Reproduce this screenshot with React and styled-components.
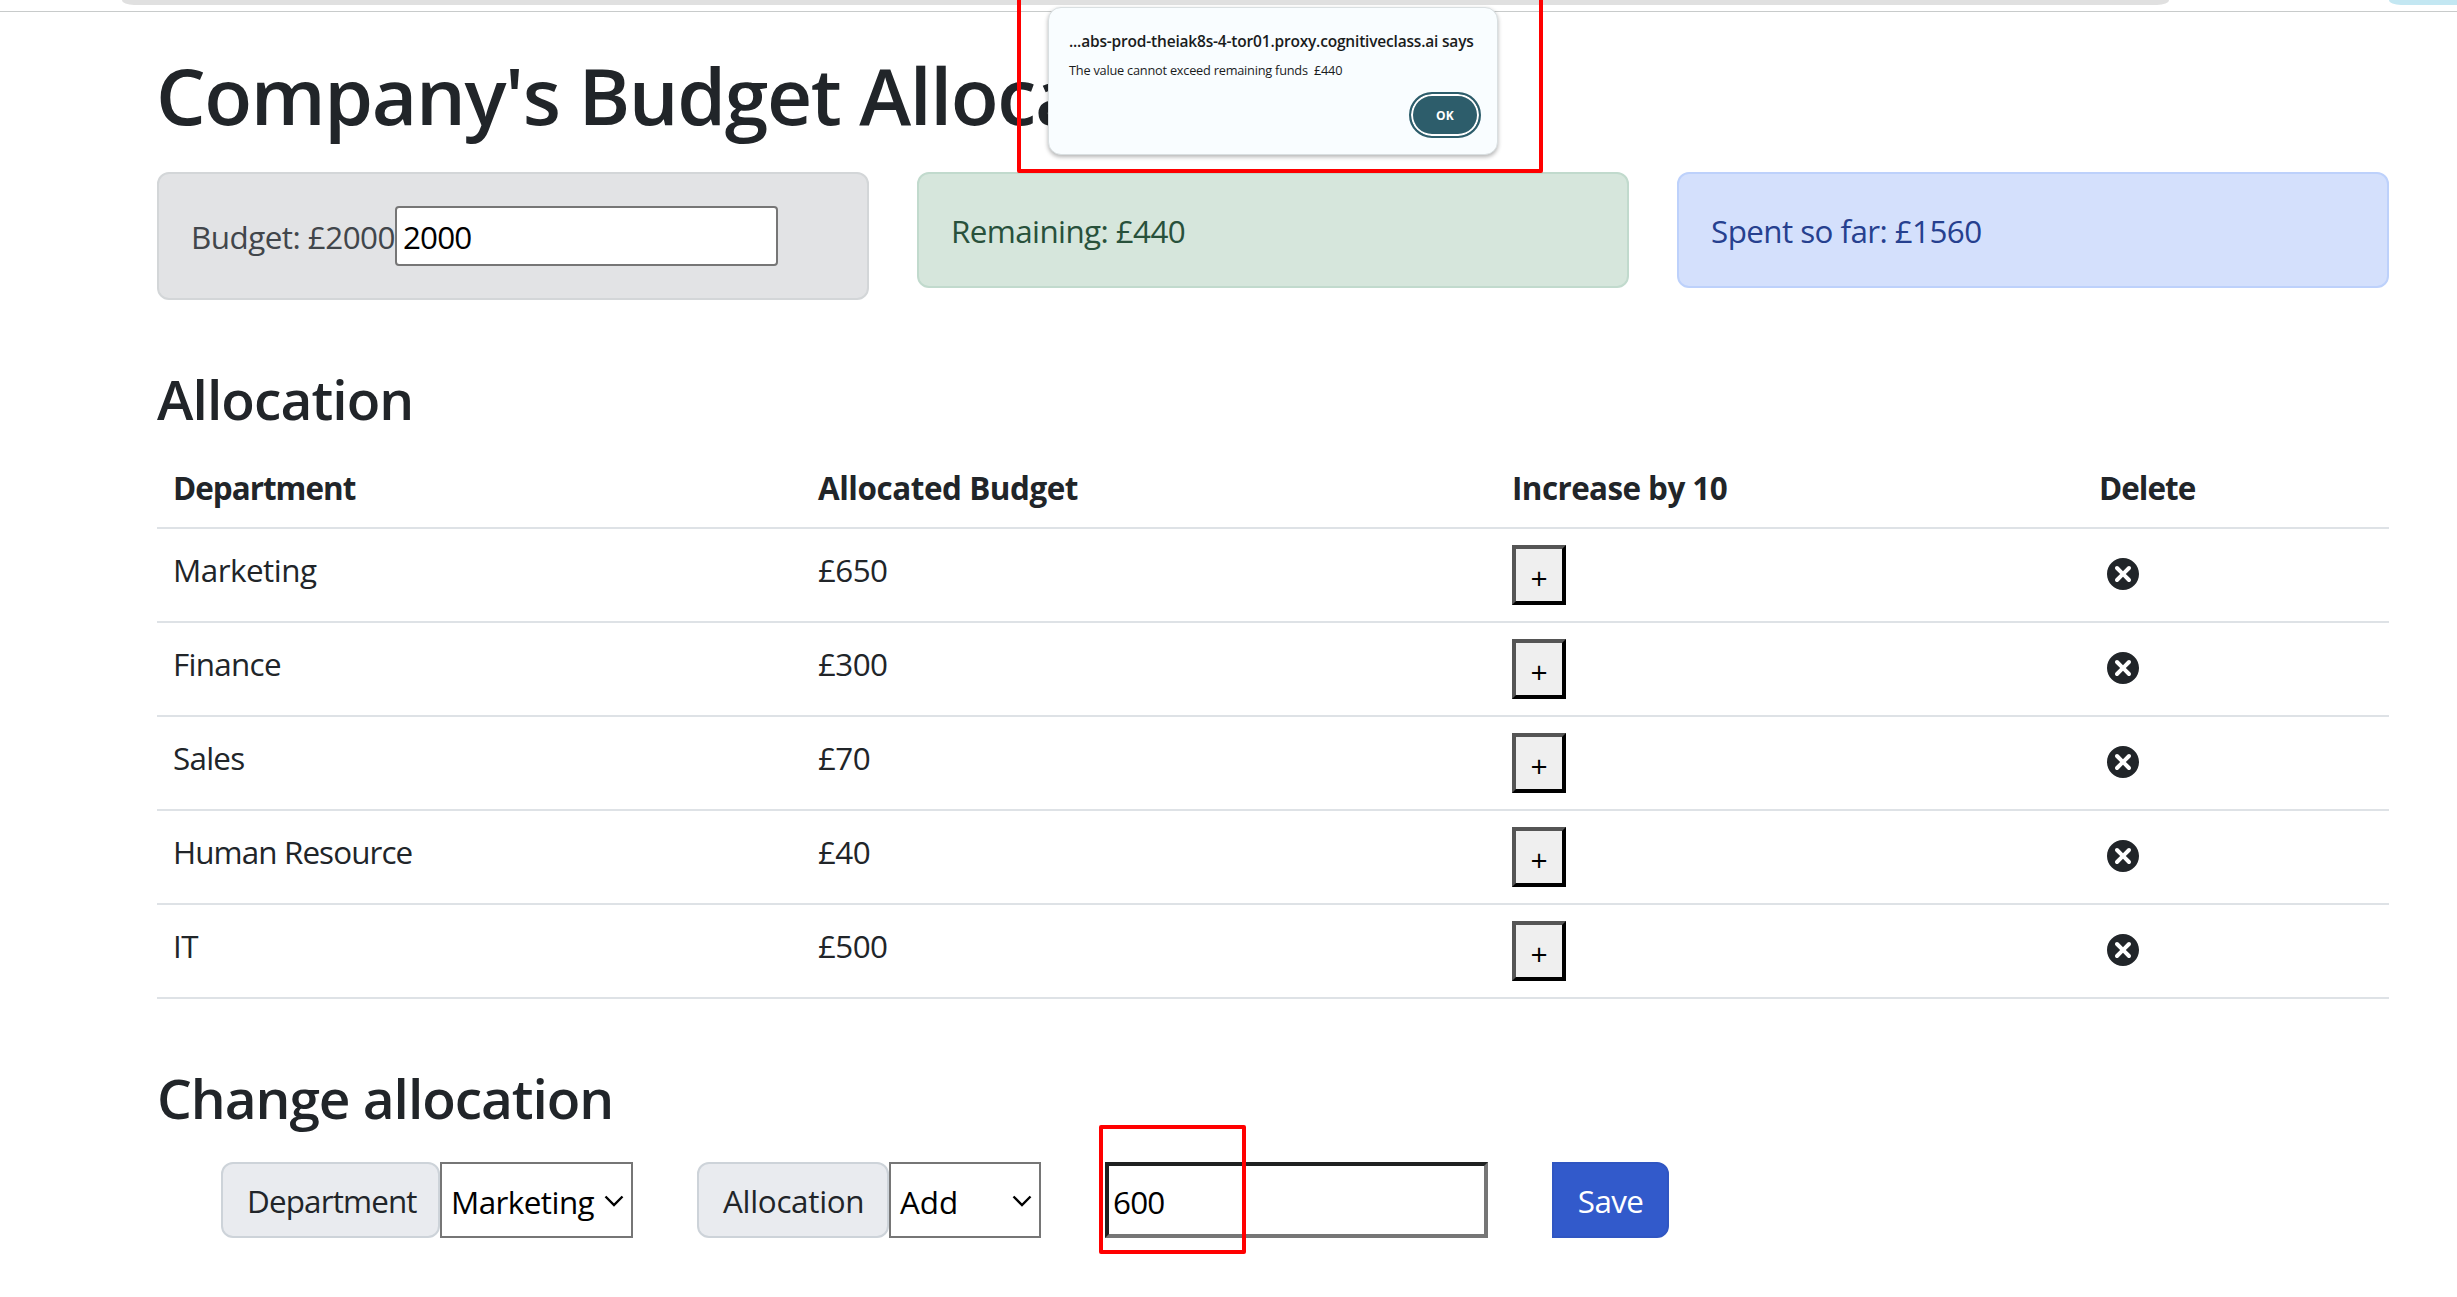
import React from "react";
import styled, { createGlobalStyle } from "styled-components";

const GlobalStyle = createGlobalStyle`
  * { box-sizing: border-box; }
  body {
    margin: 0;
    background: #fff;
    color: #212529;
    font-family: "Open Sans", "Noto Sans", sans-serif;
    font-size: 31.4px;
    line-height: 48px;
    overflow: hidden;
  }
  input, button, select { font-family: inherit; font-size: inherit; line-height: inherit; margin: 0; }
`;

const Screen = styled.div`
  position: relative;
  width: 2457px;
  height: 1297px;
  overflow: hidden;
`;

const BrowserEdge = styled.div`
  display: flex;
  justify-content: space-between;
  height: 12px;
  padding-left: 122px;
  border-bottom: 1px solid #c8cbcb;
`;

const AddressBar = styled.div`
  width: 2047px;
  height: 5px;
  background: #e0e0e0;
  border-radius: 0 0 12px 12px / 0 0 5px 5px;
`;

const ProfileChip = styled.div`
  width: 68px;
  height: 5px;
  background: #c3e7f2;
  border-radius: 0 0 0 12px / 0 0 0 5px;
`;

const Container = styled.main`
  width: 2232px;
  margin-left: 157px;
  padding-top: 35px;
`;

const Title = styled.h1`
  margin: 0 0 0 -1px;
  font-size: 78.5px;
  font-weight: 600;
  line-height: 96px;
  letter-spacing: -1.4px;
  white-space: nowrap;
`;

const Heading = styled.h3`
  margin: 0;
  padding-top: ${(p) => p.$top}px;
  font-size: 55px;
  font-weight: 600;
  line-height: 67px;
  letter-spacing: ${(p) => p.$ls}px;
`;

const Summary = styled.section`
  display: grid;
  grid-template-columns: repeat(3, 1fr);
  column-gap: 48px;
  align-items: start;
  height: 128px;
  margin-top: 29px;
`;

const tones = {
  secondary: "color:#41464b;background:#e2e3e5;border-color:#d3d6d8;",
  success: "color:#28513b;background:#d6e6dc;border-color:#c1dacd;",
  primary: "color:#26408f;background:#d4e0fc;border-color:#bdd1fb;",
};

const Alert = styled.div`
  display: flex;
  align-items: center;
  height: ${(p) => (p.$tall ? 128 : 116)}px;
  padding: 2px 32px 0;
  border: 2px solid;
  border-radius: 12px;
  ${(p) => tones[p.$tone]}
`;

const Text = styled.span`
  letter-spacing: ${(p) => p.$ls}px;
  white-space: pre;
`;

const BudgetInput = styled.input`
  width: 383px;
  height: 60px;
  margin: 0 0 2px;
  padding: 1px 6px 0;
  color: #000;
  background: #fff;
  border: 2px solid #767676;
  border-radius: 4px;
  letter-spacing: -0.87px;
`;

const Table = styled.table`
  width: 2232px;
  margin-top: 15px;
  border-collapse: separate;
  border-spacing: 0;
  table-layout: fixed;
`;

const HeadCell = styled.th`
  width: ${(p) => p.$w}px;
  height: 82px;
  padding: 17px 16px 15px;
  border-bottom: 2px solid #dee2e6;
  text-align: left;
  font-weight: 700;
`;

const Cell = styled.td`
  height: 94px;
  padding: ${(p) => (p.$control ? 16 : 17)}px 16px 0;
  border-bottom: 2px solid #dee2e6;
  vertical-align: top;
`;

const PlusButton = styled.button`
  display: block;
  width: 54px;
  height: 60px;
  padding: 6px 0 0;
  color: #000;
  background: #efefef;
  border: 4px solid;
  border-color: #555 #000 #000 #555;
  border-radius: 0;
  line-height: 46px;
  font-size: 30px;
  text-align: center;
`;

const DeleteIcon = styled.svg`
  display: block;
  width: 48px;
  height: 48px;
  margin-top: 5px;
`;

const Form = styled.form`
  display: flex;
  height: 76px;
  margin: 31px 0 0 64px;
`;

const GroupLabel = styled.label`
  width: ${(p) => p.$w}px;
  padding: 13px 0 0 24px;
  background: #e9ebef;
  border: 2px solid #cdd3d9;
  border-radius: 12px;
`;

const Select = styled.div`
  display: flex;
  justify-content: space-between;
  width: ${(p) => p.$w}px;
  margin-right: 64px;
  padding: 14px 8px 0 9px;
  color: #000;
  background: #fff;
  border: 2px solid #767676;
`;

const Chevron = styled.svg`
  width: 20px;
  height: 14px;
  margin: 16px -1px 0 0;
`;

const AmountInput = styled.input`
  width: 383px;
  height: 76px;
  margin-right: 64px;
  padding: 2px 4px 0;
  color: #000;
  background: #fff;
  border: 4px solid;
  border-color: #1f2121 #767676 #767676 #1f2121;
  border-radius: 0;
  letter-spacing: -0.8px;
`;

const SaveButton = styled.button`
  width: 117px;
  height: 76px;
  padding: 2px 0 0;
  color: #fff;
  background: #325acb;
  border: 2px solid #3056c2;
  border-radius: 0 12px 12px 0;
  letter-spacing: -0.67px;
`;

const Dialog = styled.div`
  position: absolute;
  left: 1048px;
  top: 7px;
  width: 450px;
  height: 148px;
  padding: 23px 16px 0 20px;
  display: flex;
  flex-direction: column;
  color: #191c1d;
  background: #f9fdff;
  border: 1px solid #d9dfe1;
  border-radius: 13px;
  box-shadow: 0 2px 4px rgba(0, 0, 0, 0.3);
`;

const DialogTitle = styled.div`
  font-size: 15.5px;
  line-height: 20px;
  font-weight: 600;
  letter-spacing: -0.19px;
  white-space: nowrap;
`;

const DialogText = styled.div`
  margin-top: 9px;
  font-size: 12.75px;
  line-height: 20px;
  letter-spacing: -0.22px;
  white-space: pre;
`;

const OkButton = styled.button`
  align-self: flex-end;
  width: 72px;
  height: 46px;
  margin-top: 12px;
  padding: 2px 0 0;
  color: #fff;
  background: #2d5d6b;
  border: 2px solid #2d5d6b;
  border-radius: 23px;
  box-shadow: inset 0 0 0 2px #fff;
  font-size: 12px;
  line-height: 16px;
  font-weight: 700;
  letter-spacing: 0.2px;
`;

const RedMark = styled.div`
  position: absolute;
  left: ${(p) => p.$x}px;
  top: ${(p) => p.$y}px;
  width: ${(p) => p.$w}px;
  height: ${(p) => p.$h}px;
  border: 4px solid #f00;
  border-radius: 2px;
`;

const rows = [
  { name: "Marketing", ls: -0.5, cost: "£650" },
  { name: "Finance", ls: -0.7, cost: "£300" },
  { name: "Sales", ls: -0.75, cost: "£70" },
  { name: "Human Resource", ls: -0.9, cost: "£40" },
  { name: "IT", ls: -0.4, cost: "£500" },
];

const columns = [
  { label: "Department", w: 645, ls: -0.98 },
  { label: "Allocated Budget", w: 694, ls: -0.44 },
  { label: "Increase by 10", w: 587, ls: -0.57 },
  { label: "Delete", w: 306, ls: -0.96 },
];

function Arrow() {
  return (
    <Chevron viewBox="0 0 20 14" fill="none" stroke="#000" strokeWidth="2.4">
      <path d="M1.5 2.5 10 11l8.500-8.500" />
    </Chevron>
  );
}

function Remove() {
  return (
    <DeleteIcon viewBox="0 0 24 24" fill="#212529">
      <path d="M12 4c-4.419 0-8 3.582-8 8s3.581 8 8 8 8-3.582 8-8-3.581-8-8-8zm3.707 10.293c.391.391.391 1.023 0 1.414-.195.195-.451.293-.707.293s-.512-.098-.707-.293l-2.293-2.293-2.293 2.293c-.195.195-.451.293-.707.293s-.512-.098-.707-.293c-.391-.391-.391-1.023 0-1.414l2.293-2.293-2.293-2.293c-.391-.391-.391-1.023 0-1.414s1.023-.391 1.414 0l2.293 2.293 2.293-2.293c.391-.391 1.023-.391 1.414 0s.391 1.023 0 1.414l-2.293 2.293 2.293 2.293z" />
    </DeleteIcon>
  );
}

export default function App() {
  return (
    <Screen>
      <GlobalStyle />
      <BrowserEdge>
        <AddressBar />
        <ProfileChip />
      </BrowserEdge>
      <Container>
        <Title>Company's Budget Allocation</Title>
        <Summary>
          <Alert $tone="secondary" $tall>
            <Text $ls={-0.52}>Budget: £2000</Text>
            <BudgetInput defaultValue="2000" />
          </Alert>
          <Alert $tone="success">
            <Text $ls={-0.6}>Remaining: £440</Text>
          </Alert>
          <Alert $tone="primary">
            <Text $ls={-0.58}>Spent so far: £1560</Text>
          </Alert>
        </Summary>
        <Heading $top={65} $ls={-0.9}>Allocation</Heading>
        <Table>
          <thead>
            <tr>
              {columns.map((c) => (
                <HeadCell key={c.label} $w={c.w}>
                  <Text $ls={c.ls}>{c.label}</Text>
                </HeadCell>
              ))}
            </tr>
          </thead>
          <tbody>
            {rows.map((r) => (
              <tr key={r.name}>
                <Cell><Text $ls={r.ls}>{r.name}</Text></Cell>
                <Cell><Text $ls={-0.6}>{r.cost}</Text></Cell>
                <Cell $control><PlusButton>+</PlusButton></Cell>
                <Cell $control><Remove /></Cell>
              </tr>
            ))}
          </tbody>
        </Table>
        <Heading $top={65} $ls={-1.05}>Change allocation</Heading>
        <Form>
          <GroupLabel $w={219}><Text $ls={-0.85}>Department</Text></GroupLabel>
          <Select $w={193}>
            <Text $ls={-0.55}>Marketing</Text>
            <Arrow />
          </Select>
          <GroupLabel $w={192}><Text $ls={-0.3}>Allocation</Text></GroupLabel>
          <Select $w={152}>
            <Text $ls={0}>Add</Text>
            <Arrow />
          </Select>
          <AmountInput defaultValue="600" />
          <SaveButton type="button">Save</SaveButton>
        </Form>
      </Container>
      <Dialog>
        <DialogTitle>...abs-prod-theiak8s-4-tor01.proxy.cognitiveclass.ai says</DialogTitle>
        <DialogText>{"The value cannot exceed remaining funds  £440"}</DialogText>
        <OkButton>OK</OkButton>
      </Dialog>
      <RedMark $x={1017} $y={-10} $w={526} $h={183} />
      <RedMark $x={1099} $y={1125} $w={147} $h={129} />
    </Screen>
  );
}
